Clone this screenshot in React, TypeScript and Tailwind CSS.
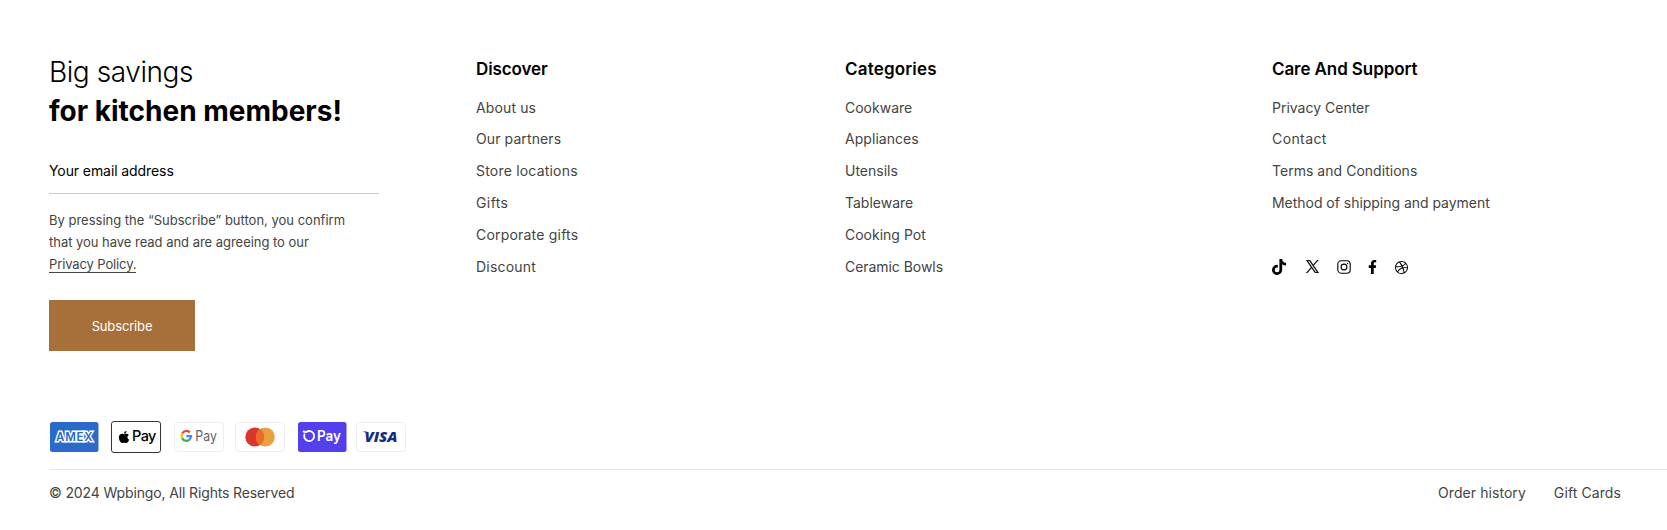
import type { ReactNode } from "react";
import { FaApple, FaTiktok, FaFacebookF } from "react-icons/fa";
import { BsDribbble } from "react-icons/bs";

type Item = { label: string; cls?: string };

const discover: Item[] = [
  { label: "About us", cls: "tracking-[0.12px]" },
  { label: "Our partners", cls: "tracking-[0.1px]" },
  { label: "Store locations", cls: "tracking-[0.2px]" },
  { label: "Gifts", cls: "tracking-[0.4px]" },
  { label: "Corporate gifts", cls: "tracking-[0.2px]" },
  { label: "Discount", cls: "tracking-[0.2px]" },
];
const categories: Item[] = [
  { label: "Cookware" },
  { label: "Appliances", cls: "tracking-[0.05px]" },
  { label: "Utensils" },
  { label: "Tableware" },
  { label: "Cooking Pot" },
  { label: "Ceramic Bowls", cls: "tracking-[-0.05px]" },
];
const support: Item[] = [
  { label: "Privacy Center" },
  { label: "Contact", cls: "tracking-[0.4px]" },
  { label: "Terms and Conditions", cls: "tracking-[0.03px]" },
  { label: "Method of shipping and payment", cls: "tracking-[-0.03px]" },
];

function Column({ title, titleCls = "", items, className, children }: { title: string; titleCls?: string; items: Item[]; className: string; children?: ReactNode }) {
  return (
    <div className={className}>
      <h3 className={`text-[17px] leading-6 font-semibold text-black ${titleCls}`}>{title}</h3>
      <ul className="mt-[11px]">
        {items.map((i) => (
          <li key={i.label} className="h-8 text-[14px] leading-8 first:h-[31px]">
            <a href="#" className={i.cls}>{i.label}</a>
          </li>
        ))}
      </ul>
      {children}
    </div>
  );
}

function XIcon({ className }: { className: string }) {
  return (
    <svg className={className} viewBox="0 0 24 24" fill="currentColor" stroke="currentColor" strokeWidth=".7">
      <path d="M14.234 10.162 22.977 0h-2.072l-7.591 8.824L7.251 0H.258l9.168 13.343L.258 24H2.33l8.016-9.318L16.749 24h6.993zm-2.837 3.299-.929-1.329L3.076 1.56h3.182l5.965 8.532.929 1.329 7.754 11.09h-3.182z" />
    </svg>
  );
}

function InstagramIcon({ className }: { className: string }) {
  return (
    <svg className={className} viewBox="0 0 14 14" fill="none" stroke="currentColor" strokeWidth="1.1">
      <rect x=".8" y=".8" width="12.4" height="12.4" rx="3.4" />
      <circle cx="7" cy="7" r="2.9" />
      <circle cx="10.6" cy="3.5" r=".7" fill="currentColor" stroke="none" />
    </svg>
  );
}

function Payments() {
  return (
    <div className="flex h-8 items-center">
      <svg className="ml-px h-[30px] w-[49px]" viewBox="0 0 49 30">
        <rect width="48.5" height="30" rx="2.5" fill="#2a6ac8" />
        <text x="6" y="19.2" textLength="36.5" lengthAdjust="spacing" fontFamily="Inter, sans-serif" fontWeight="600" fontSize="11.5" fill="#2a6ac8" stroke="#fff" strokeWidth="2.8" paintOrder="stroke">AMEX</text>
      </svg>
      <div className="ml-[12px] flex h-8 w-[50px] items-center rounded-[3px] border border-[#333] bg-white pl-[5px] text-black">
        <FaApple size={14} className="mr-px shrink-0" />
        <span className="-mt-0.5 text-[14.5px] font-medium tracking-[-0.6px]">Pay</span>
      </div>
      <svg className="ml-[13px] h-[30px] w-[50px]" viewBox="0 0 50 30">
        <rect x=".5" y=".5" width="49" height="29" rx="3" fill="#fff" stroke="#eee" />
        <g fill="none" strokeWidth="2.2">
          <path d="M15.9 10.4A4.8 4.8 0 0 0 8.2 11.6" stroke="#ea4335" />
          <path d="M8.2 11.6a4.8 4.8 0 0 0 0 4.8" stroke="#fbbc04" />
          <path d="M8.2 16.4a4.8 4.8 0 0 0 7.3 1.2" stroke="#34a853" />
          <path d="M15.5 17.6a4.8 4.8 0 0 0 1.5-3.5h-4.7" stroke="#4285f4" />
        </g>
        <text x="21.3" y="18.8" textLength="21.5" lengthAdjust="spacingAndGlyphs" fontFamily="Inter, sans-serif" fontSize="14.5" fill="#5f6368">Pay</text>
      </svg>
      <svg className="ml-[11px] h-[30px] w-[50px]" viewBox="0 0 50 30">
        <rect x=".5" y=".5" width="49" height="29" rx="3" fill="#fff" stroke="#eee" />
        <circle cx="19.8" cy="15" r="9.5" fill="#d9372c" />
        <circle cx="30.3" cy="15" r="9.5" fill="#e9a040" />
        <path d="M25.05 7.1a9.5 9.5 0 0 1 0 15.8a9.5 9.5 0 0 1 0-15.8" fill="#ec6a2c" />
      </svg>
      <svg className="ml-[13px] h-[30px] w-[49px]" viewBox="0 0 49 30">
        <rect width="48.5" height="30" rx="2.5" fill="#5340ec" />
        <path d="M5.2 8.9c1 1.3 2.4 1.4 3.6.7a5 5 0 1 1-2.1 2.1M10.7 8.8a5 5 0 0 1 1.6.2" fill="none" stroke="#fff" strokeWidth="1.8" />
        <text x="19" y="18.8" textLength="24" lengthAdjust="spacingAndGlyphs" fontFamily="Inter, sans-serif" fontWeight="600" fontSize="14.5" fill="#fff">Pay</text>
      </svg>
      <svg className="ml-[9px] h-[30px] w-[50px]" viewBox="0 0 50 30">
        <rect x=".5" y=".5" width="49" height="29" rx="3" fill="#fff" stroke="#eee" />
        <text x="8.5" y="20" textLength="33" lengthAdjust="spacingAndGlyphs" fontFamily="Open Sans, sans-serif" fontWeight="800" fontStyle="italic" fontSize="14.8" fill="#172b85">VISA</text>
        <path d="M6.3 9.4h4.6l1.5 3.2c-1.5-1.6-3.4-2.4-6.1-3.2Z" fill="#172b85" />
      </svg>
    </div>
  );
}

export default function App() {
  return (
    <footer className="h-[530px] overflow-hidden bg-white pl-[49px] font-['Inter',sans-serif] text-[#444]">
      <div className="flex h-[421px] pt-[53px]">
        <section className="w-[427px]">
          <h2 className="text-[28px] leading-[39px] text-black">
            <span className="block font-light tracking-[-0.43px]">Big savings</span>
            <span className="block font-bold">for kitchen members!</span>
          </h2>
          <form className="mt-[20px]" onSubmit={(e) => e.preventDefault()}>
            <div className="h-[43px] w-[330px] border-b border-[#c8c8c8] text-[14px] leading-[40px] text-black">
              <span className="tracking-[-0.09px]">Your email address</span>
            </div>
            <p className="mt-[15px] text-[13px] leading-[22px] whitespace-nowrap">
              <span className="block">By pressing the “Subscribe” button, you confirm</span>
              <span className="block tracking-[-0.03px]">that you have read and are agreeing to our</span>
              <a href="#" className="block h-[20px] w-[87px] border-b border-[#444] leading-[22px] tracking-[-0.12px]">Privacy Policy.</a>
            </p>
            <button className="mt-[27px] flex h-[51px] w-[146px] items-center justify-center bg-[#a7703b] pt-[3px] text-[13px] tracking-[-0.15px] text-white">
              <span>Subscribe</span>
            </button>
          </form>
        </section>
        <Column title="Discover" titleCls="tracking-[-0.12px]" items={discover} className="w-[369px] pt-[4px]" />
        <Column title="Categories" titleCls="tracking-[0.18px]" items={categories} className="w-[427px] pt-[4px]" />
        <Column title="Care And Support" titleCls="tracking-[-0.09px]" items={support} className="pt-[4px]">
          <div className="mt-[40px] flex h-4 items-center text-black">
            <FaTiktok className="-mt-px h-4 w-[14px]" />
            <XIcon className="-mt-px ml-5 size-[13px]" />
            <InstagramIcon className="ml-[18px] size-[14px]" />
            <FaFacebookF className="ml-[17px] h-[14px] w-[9px]" />
            <BsDribbble className="ml-[18px] size-[13px]" />
          </div>
        </Column>
      </div>
      <Payments />
      <div className="mt-[16px] flex justify-between border-t border-[#e8e8e8] pr-[46px] text-[14px] leading-[46px]">
        <span className="tracking-[-0.14px]">© 2024 Wpbingo, All Rights Reserved</span>
        <nav className="flex gap-7">
          <a href="#" className="tracking-[0.06px]">Order history</a>
          <a href="#" className="tracking-[0.1px]">Gift Cards</a>
        </nav>
      </div>
    </footer>
  );
}
